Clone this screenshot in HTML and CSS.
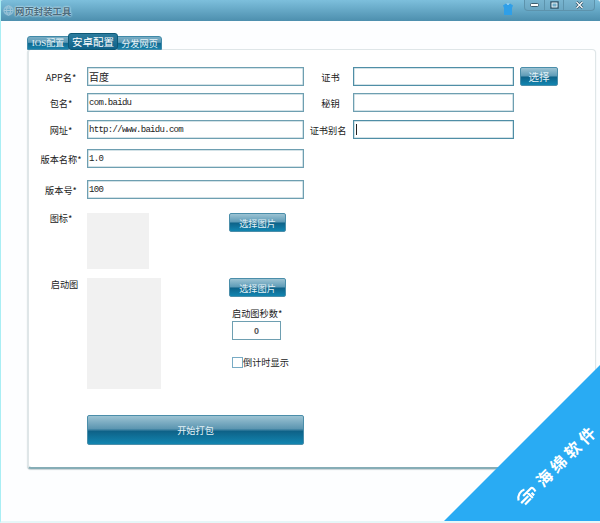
FILE: index.html
```html
<!DOCTYPE html>
<html lang="zh">
<head>
<meta charset="utf-8">
<title>网页封装工具</title>
<link rel="stylesheet" href="styles.css">
</head>
<body>
<div class="window">
  <header class="titlebar">
    <svg class="app-icon" width="11" height="11" viewBox="0 0 11 11" fill="none" stroke="#9fc6da" stroke-width="1"><circle cx="5.5" cy="5.5" r="4.6"/><ellipse cx="5.5" cy="5.5" rx="2" ry="4.6"/><path d="M1 5.5h9M1.7 3h7.6M1.7 8h7.6"/></svg>
    <span class="app-title">网页封装工具</span>
    <svg class="skin-icon" width="10" height="13" viewBox="0 0 10 13"><path d="M3 0.5h4l3 2-1 2.5v7H1V5L0 2.500z" fill="#2f9fe8"/><path d="M3 .5h4L5 2z" fill="#bfe4f7"/></svg>
    <div class="win-controls">
      <span class="win-btn win-min"><svg width="9" height="4" viewBox="0 0 9 4"><rect x=".5" y=".5" width="8" height="3" rx="1" fill="#fff" stroke="#3d5f70"/></svg></span>
      <span class="win-btn win-max"><svg width="9" height="8" viewBox="0 0 9 8" fill="none"><rect x="1" y="1" width="7" height="6" fill="none" stroke="#33566a" stroke-width="1.500"/><rect x="2" y="2" width="5" height="4" fill="none" stroke="#fff" stroke-width=".8"/></svg></span>
      <span class="win-btn win-close"><svg width="9" height="8" viewBox="0 0 9 8"><path d="M1.500 1l6 6M7.500 1l-6 6" stroke="#33566a" stroke-width="2.600"/><path d="M1.500 1l6 6M7.500 1l-6 6" stroke="#fff" stroke-width="1.200"/></svg></span>
    </div>
  </header>

  <main class="content">
    <nav class="tabs">
      <span class="tab tab-ios">IOS配置</span>
      <span class="tab tab-active">安卓配置</span>
      <span class="tab tab-web">分发网页</span>
    </nav>

    <section class="panel">
      <div class="col-left">
        <div class="row">
          <label class="label">APP名*</label>
          <div class="input input-cn">百度</div>
        </div>
        <div class="row row-7">
          <label class="label">包名*</label>
          <div class="input">com.baidu</div>
        </div>
        <div class="row row-8">
          <label class="label">网址*</label>
          <div class="input">http://www.baidu.com</div>
        </div>
        <div class="row row-10">
          <label class="label">版本名称*</label>
          <div class="input">1.0</div>
        </div>
        <div class="row row-12">
          <label class="label">版本号*</label>
          <div class="input">100</div>
        </div>

        <div class="media media-icon">
          <label class="label label-media">图标*</label>
          <div class="image-box box-icon"></div>
          <button class="btn btn-pick btn-after-icon">选择图片</button>
        </div>

        <div class="media media-splash">
          <label class="label label-media label-splash">启动图</label>
          <div class="image-box box-splash"></div>
          <div class="splash-side">
            <button class="btn btn-pick">选择图片</button>
            <div class="seconds">
              <span class="seconds-label">启动图秒数*</span>
              <div class="seconds-input">0</div>
              <div class="check-row"><span class="checkbox"></span><span>倒计时显示</span></div>
            </div>
          </div>
        </div>

        <button class="btn btn-start">开始打包</button>
      </div>

      <div class="col-right">
        <div class="row">
          <label class="label-right">证书</label>
          <div class="input input-narrow input-dark"></div>
          <button class="btn btn-choose">选择</button>
        </div>
        <div class="row row-7">
          <label class="label-right">秘钥</label>
          <div class="input input-narrow"></div>
        </div>
        <div class="row row-8">
          <label class="label-right label-alias">证书别名</label>
          <div class="input input-narrow input-dark"><span class="caret"></span></div>
        </div>
      </div>
    </section>
  </main>

  <aside class="ribbon">
    <div class="ribbon-mark">
      <svg width="22" height="17" viewBox="0 0 24 18" fill="none" stroke="#fff" stroke-width="2.400"><path d="M2 7c3-5 9-6 13-4M9 7h12c2 0 2 3 1 6M2 11h11M4 15h9M15 7v9M18 11v4"/></svg>
      <span class="ribbon-text">海绵软件</span>
    </div>
  </aside>
</div>
</body>
</html>
```

FILE: styles.css
```css
* { box-sizing: border-box; }

html, body { margin: 0; padding: 0; }

body {
  width: 600px;
  height: 523px;
  overflow: hidden;
  font-family: "Noto Sans CJK SC", "Liberation Sans", sans-serif;
  font-size: 9.200px;
  color: #222;
  background: #fff;
}

.window {
  position: relative;
  width: 600px;
  height: 523px;
  overflow: hidden;
  background: #fdfeff;
  border-left: 1px solid #a9eef4;
  border-bottom: 2px solid #e6f7f8;
}

.titlebar {
  display: flex;
  align-items: center;
  height: 21px;
  margin-left: -1px;
  padding-left: 3px;
  background: linear-gradient(#7dbfdc, #4d8fae);
  border-radius: 3px 3px 0 0;
}

.app-icon { flex: none; }

.app-title {
  margin-left: 1px;
  font-size: 9.400px;
  font-weight: 700;
  color: #4a6b7c;
  text-shadow: 0 0 2px #d5edf6, 0 0 2px #d5edf6;
}

.skin-icon {
  flex: none;
  margin-left: auto;
  margin-top: -3px;
}

.win-controls {
  display: flex;
  align-items: center;
  align-self: flex-start;
  width: 71px;
  height: 11px;
  margin-left: 11px;
  margin-right: 5px;
  border: 1px solid #5d93ac;
  border-top: 0;
  border-radius: 0 0 4px 4px;
  background: linear-gradient(#79b5d0, #6ba7c3);
}

.win-btn {
  display: flex;
  align-items: center;
  justify-content: center;
  height: 100%;
  border-right: 1px solid #5d93ac;
}

.win-min { width: 20px; }
.win-max { width: 19px; }
.win-close { flex: 1; border-right: 0; }

.content { padding: 12px 4px 0 26px; }

.tabs {
  position: relative;
  z-index: 1;
  display: flex;
  align-items: center;
  height: 17px;
}

.tab {
  height: 14px;
  margin-top: 2px;
  border: 1px solid #3f89a8;
  background: linear-gradient(#79adc4 0, #5a99b6 45%, #10688f 50%, #1782ab 100%);
  color: #e6f3f8;
  font-size: 9.200px;
  line-height: 12px;
  text-align: center;
  white-space: nowrap;
}

.tab-ios {
  width: 42px;
  border-radius: 3px 0 0 0;
  font-family: "Liberation Serif", "Noto Sans CJK SC", serif;
  font-size: 9px;
}

.tab-web {
  width: 45px;
  margin-left: -1px;
  border-radius: 0 3px 0 0;
}

.tab-active {
  position: relative;
  z-index: 1;
  width: 50px;
  height: 17px;
  margin-top: 0;
  margin-left: -1px;
  border: 1px solid #0c5876;
  border-radius: 3px;
  background: linear-gradient(#2d7c9e, #10628a);
  color: #fff;
  font-size: 10.500px;
  line-height: 15px;
}

.panel {
  display: flex;
  height: 420px;
  margin-top: -1px;
  padding: 17px 0 0;
  background: #fff;
  border: 1px solid #dfe6e8;
  border-bottom: 2px solid #86adb6;
  border-left-width: 2px;
  border-radius: 4px;
  box-shadow: 0 1px 1px #c9d3d6;
}

.col-left { width: 274px; flex: none; }

.col-right { flex: none; }

.row {
  display: flex;
  align-items: center;
  height: 19px;
}

.row-7 { margin-top: 7px; }
.row-8 { margin-top: 8px; }
.row-10 { margin-top: 10px; }
.row-12 { margin-top: 12px; }

.label {
  flex: none;
  width: 58px;
  padding-left: 9px;
  padding-right: 3px;
  text-align: center;
  white-space: nowrap;
}

.label-splash { padding-left: 13px; padding-right: 0; }

.label-right {
  flex: none;
  width: 50px;
  padding-left: 5px;
  text-align: center;
  white-space: nowrap;
}

.label-alias { padding-left: 0; }

.input {
  display: flex;
  align-items: center;
  flex: none;
  width: 217px;
  height: 19px;
  padding-left: 1px;
  background: #fff;
  border: 1px solid #6e9fb1;
  box-shadow: inset 0 0 0 0.500px #a8c5d0;
  font-family: "Liberation Mono", "Noto Sans CJK SC", monospace;
  font-size: 9px;
  letter-spacing: -0.700px;
  color: #222;
}

.input-cn {
  font-family: "Noto Sans CJK SC", sans-serif;
  font-size: 10px;
  letter-spacing: 0;
}

.input-narrow { width: 161px; }

.input-dark { border-color: #4f8ea6; }

.caret {
  width: 1px;
  height: 11px;
  margin-left: 1px;
  background: #222;
}

.media { display: flex; }

.media-icon { margin-top: 14px; }
.media-splash { margin-top: 9px; }

.label-media { line-height: 13px; }

.media-icon .label-media { line-height: 11px; }

.image-box {
  flex: none;
  background: #f1f1f1;
}

.box-icon { width: 62px; height: 56px; }
.box-splash { width: 74px; height: 111px; }

.btn {
  display: block;
  padding: 0;
  border: 1px solid #4b8eaa;
  border-radius: 2px;
  background: linear-gradient(#9cc3d3 0, #5c9ab6 48%, #0e6288 52%, #1285b0 100%);
  color: #e3f1f6;
  font-family: "Noto Sans CJK SC", sans-serif;
  font-size: 9.200px;
  cursor: pointer;
}

.btn-pick {
  flex: none;
  width: 57px;
  height: 19px;
}

.btn-after-icon { margin-left: 80px; }

.splash-side {
  flex: none;
  width: 70px;
  margin-left: 68px;
}

.seconds {
  display: flex;
  flex-direction: column;
  align-items: flex-start;
  padding-left: 3px;
}

.seconds-label {
  margin-top: 9px;
  line-height: 14px;
  white-space: nowrap;
}

.seconds-input {
  display: flex;
  align-items: center;
  justify-content: center;
  width: 49px;
  height: 19px;
  margin-top: 1px;
  border: 1px solid #6e9fb1;
  font-family: "Liberation Sans", sans-serif;
  font-size: 9px;
  font-weight: 700;
  color: #555;
}

.check-row {
  display: flex;
  align-items: center;
  margin-top: 15px;
  white-space: nowrap;
}

.checkbox {
  flex: none;
  width: 11px;
  height: 11px;
  margin-right: 0;
  background: #fff;
  border: 1px solid #78abc4;
}

.btn-start {
  width: 217px;
  height: 30px;
  margin-top: 26px;
  margin-left: 58px;
  background: linear-gradient(#9cc3d3 0, #5c96b1 45%, #0e6288 55%, #1285b0 100%);
}

.btn-choose {
  flex: none;
  width: 38px;
  height: 19px;
  margin-left: 6px;
  font-size: 10.500px;
}

.ribbon {
  position: absolute;
  right: 0;
  bottom: -2px;
  width: 158px;
  height: 158px;
  background: #29abf3;
  clip-path: polygon(100% 0, 100% 100%, 0 100%);
}

.ribbon-mark {
  position: absolute;
  left: 113px;
  top: 101px;
  display: flex;
  align-items: center;
  gap: 6px;
  color: #fff;
  font-size: 16px;
  font-weight: 700;
  line-height: 20px;
  white-space: nowrap;
  transform: translate(-50%, -50%) rotate(-45deg);
}

.ribbon-text { letter-spacing: 4px; margin-right: -4px; }
```
